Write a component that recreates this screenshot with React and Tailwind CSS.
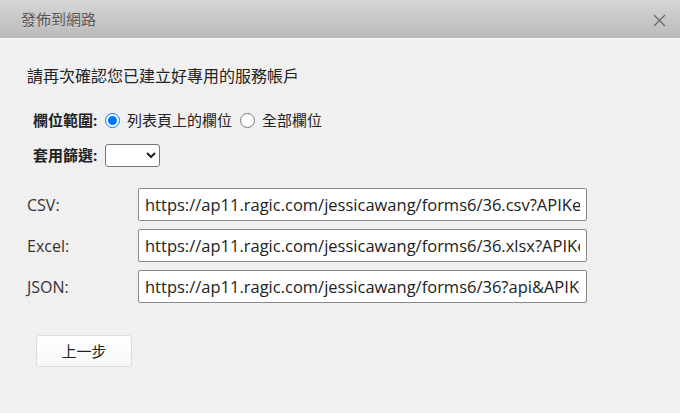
export default function App() {
  const font = { fontFamily: '"Open Sans", "Noto Sans CJK TC", sans-serif' }
  const links = [
    { label: 'CSV:', url: 'https://ap11.ragic.com/jessicawang/forms6/36.csv?APIKey=' },
    { label: 'Excel:', url: 'https://ap11.ragic.com/jessicawang/forms6/36.xlsx?APIKey=' },
    { label: 'JSON:', url: 'https://ap11.ragic.com/jessicawang/forms6/36?api&APIKey=' },
  ]

  return (
    <div className="w-[680px] h-[413px] bg-[#f0f0f0] text-[#222] overflow-hidden font-['Open_Sans','Noto_Sans_CJK_TC',sans-serif]">
      {/* Title bar */}
      <div className="h-[38px] bg-gradient-to-b from-[#d6d6d6] to-[#bababa] border-b border-[#f7f7f7] flex items-center justify-between pl-[21px] pr-[14px] box-content">
        <span className="text-[15px] text-[#555] font-['Noto_Sans_CJK_TC',sans-serif] [text-shadow:0_1px_0_rgba(255,255,255,0.35)]">發佈到網路</span>
        <svg width="13" height="13" viewBox="0 0 13 13" className="mt-[2px]">
          <path d="M1 1L12 12M12 1L1 12" stroke="#666" strokeWidth="1.2" />
        </svg>
      </div>

      <div className="pl-[27px]">
        <div className="mt-[25px] h-6 leading-6 text-[16px] text-[#222]">請再次確認您已建立好專用的服務帳戶</div>

        {/* Field scope */}
        <div className="mt-[20px] h-6 flex items-center pl-[6px] text-[15px]">
          <span className="font-bold w-[72px]">欄位範圍:</span>
          <label className="flex items-center">
            <input type="radio" name="scope" defaultChecked className="w-[15px] h-[15px] m-0" />
            <span className="ml-[7px]">列表頁上的欄位</span>
          </label>
          <label className="flex items-center ml-[8px]">
            <input type="radio" name="scope" className="w-[15px] h-[15px] m-0" />
            <span className="ml-[7px]">全部欄位</span>
          </label>
        </div>

        {/* Filter */}
        <div className="mt-[12px] flex items-center pl-[6px] text-[15px]">
          <span className="font-bold w-[72px]">套用篩選:</span>
          <select className="w-[55px] h-[23px] border border-[#767676] rounded-[3px] bg-white text-[13px]">
            <option></option>
          </select>
        </div>

        {/* Links */}
        <div className="mt-[21px] flex flex-col gap-2">
          {links.map((l) => (
            <div key={l.label} className="flex items-center">
              <span className="w-[111px] text-[16px] text-[#333]" style={font}>{l.label}</span>
              <input
                readOnly
                value={l.url}
                className="w-[449px] h-[33px] border border-[#8a8a8a] rounded-[2px] bg-white px-[6px] text-[16.5px] text-[#222] outline-none"
                style={font}
              />
            </div>
          ))}
        </div>

        <button className="mt-[32px] ml-[9px] w-[96px] h-[32px] border border-[#dcdcdc] rounded-[3px] bg-gradient-to-b from-white to-[#f7f7f7] text-[15px] text-[#222]">
          上一步
        </button>
      </div>
    </div>
  )
}
